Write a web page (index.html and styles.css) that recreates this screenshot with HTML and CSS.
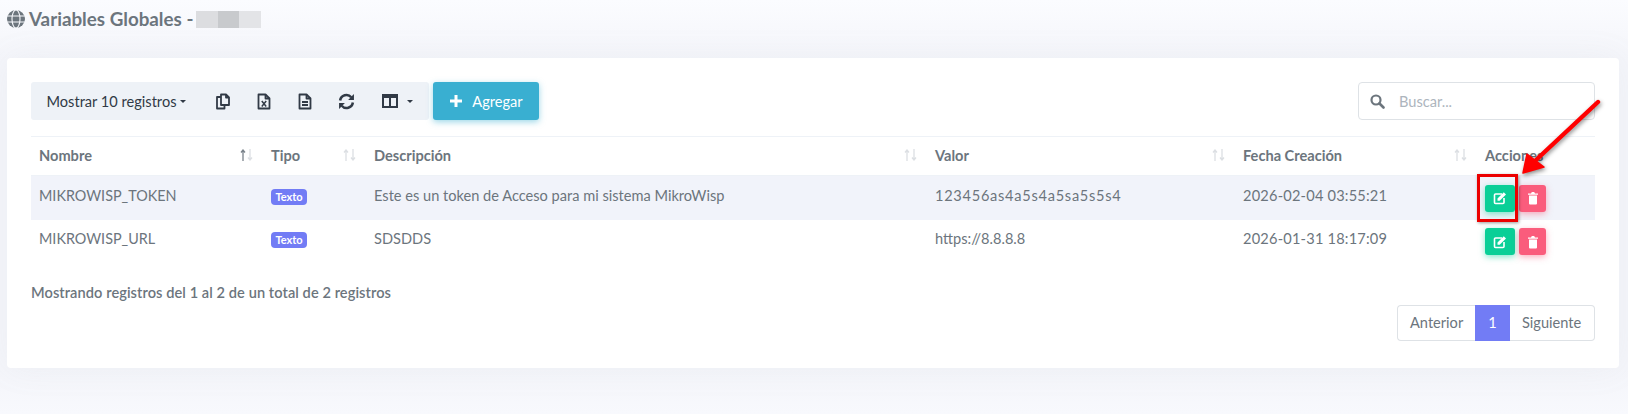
FILE: index.html
```html
<!DOCTYPE html>
<html lang="es">
<head>
<meta charset="utf-8">
<title>Variables Globales</title>
<link rel="stylesheet" href="styles.css">
</head>
<body>
<header class="page-title">
  <svg class="globe" viewBox="0 0 18 18"><circle cx="9" cy="9" r="9" fill="#6c757d"/><g fill="none" stroke="#f8f9fd" stroke-width="1.1"><ellipse cx="9" cy="9" rx="4" ry="9"/><path d="M0 6h18M0 12h18"/></g></svg>
  <h1>Variables Globales -</h1>
  <div class="redacted"><span class="r1"></span><span class="r2"></span><span class="r3"></span></div>
</header>
<main class="card">
  <div class="controls">
    <div class="toolbar">
      <button class="tool tool-length">Mostrar 10 registros<i class="caret"></i></button>
      <button class="tool tool-icon"><svg viewBox="0 0 14 16" class="ico"><g fill="none" stroke="#313a46" stroke-width="1.8" stroke-linejoin="round"><path d="M5 3.500H1v11.500h7.500v-3.500"/><path d="M5 1h5l3 3v7.500H5z"/><path d="M10 1v3h3"/></g></svg></button>
      <button class="tool tool-icon"><svg viewBox="0 0 14 16" class="ico"><g fill="none" stroke="#313a46" stroke-width="1.8" stroke-linejoin="round"><path d="M1.500 1h7l4 4v10h-11z"/><path d="M8.500 1v4h4"/></g><path d="M4.800 7.500l4.400 5.500M9.200 7.500l-4.400 5.500" stroke="#313a46" stroke-width="1.5"/></svg></button>
      <button class="tool tool-icon"><svg viewBox="0 0 14 16" class="ico"><g fill="none" stroke="#313a46" stroke-width="1.8" stroke-linejoin="round"><path d="M1.500 1h7l4 4v10h-11z"/><path d="M8.500 1v4h4M4 8.500h6M4 11.500h6"/></g></svg></button>
      <button class="tool tool-icon"><svg viewBox="0 0 16 16" class="ico-wide"><g fill="none" stroke="#313a46" stroke-width="2.400"><path d="M2 7a6 6 0 0 1 10.500-3"/><path d="M14 9a6 6 0 0 1-10.500 3"/></g><path d="M15 1v5.500H9.500zM1 15V9.500h5.500z" fill="#313a46"/></svg></button>
      <button class="tool tool-cols"><svg viewBox="0 0 16 14" class="ico-cols"><path d="M1 1h14v12H1z" fill="#eef2f7" stroke="#313a46" stroke-width="2"/><path d="M1 1h14v3H1z" fill="#313a46"/><path d="M8 1v12" stroke="#313a46" stroke-width="2"/></svg><i class="caret"></i></button>
    </div>
    <button class="add"><svg viewBox="0 0 14 14" class="plus"><path d="M7 1v12M1 7h12" stroke="#fff" stroke-width="3"/></svg>Agregar</button>
    <label class="search">
      <svg viewBox="0 0 15 15" class="search-ico"><circle cx="6" cy="6" r="4.500" fill="none" stroke="#6c757d" stroke-width="2.200"/><path d="M9.500 9.500l4 4" stroke="#6c757d" stroke-width="2.600" stroke-linecap="round"/></svg>
      <span class="placeholder">Buscar...</span>
    </label>
  </div>
  <table class="data">
    <colgroup><col class="c1"><col class="c2"><col class="c3"><col class="c4"><col class="c5"><col class="c6"></colgroup>
    <thead>
      <tr>
        <th><div class="th"><span>Nombre</span><svg class="sort" viewBox="0 0 13 12"><path class="sort-on" d="M3 12V1M1 3.500L3 1l2 2.500"/><path d="M10 0v11M8 8.500l2 2.500 2-2.500"/></svg></div></th>
        <th><div class="th"><span>Tipo</span><svg class="sort" viewBox="0 0 13 12"><path d="M3 12V1M1 3.500L3 1l2 2.500M10 0v11M8 8.500l2 2.500 2-2.500"/></svg></div></th>
        <th><div class="th"><span>Descripción</span><svg class="sort" viewBox="0 0 13 12"><path d="M3 12V1M1 3.500L3 1l2 2.500M10 0v11M8 8.500l2 2.500 2-2.500"/></svg></div></th>
        <th><div class="th"><span>Valor</span><svg class="sort" viewBox="0 0 13 12"><path d="M3 12V1M1 3.500L3 1l2 2.500M10 0v11M8 8.500l2 2.500 2-2.500"/></svg></div></th>
        <th><div class="th"><span>Fecha Creación</span><svg class="sort" viewBox="0 0 13 12"><path d="M3 12V1M1 3.500L3 1l2 2.500M10 0v11M8 8.500l2 2.500 2-2.500"/></svg></div></th>
        <th><div class="th"><span>Acciones</span></div></th>
      </tr>
    </thead>
    <tbody>
      <tr class="odd">
        <td class="name">MIKROWISP_TOKEN</td>
        <td><span class="badge">Texto</span></td>
        <td>Este es un token de Acceso para mi sistema MikroWisp</td>
        <td class="token">123456as4a5s4a5sa5s5s4</td>
        <td class="date">2026-02-04 03:55:21</td>
        <td><div class="actions">
          <button class="act edit"><svg viewBox="0 0 14 14" class="act-ico"><path d="M9 3H2.500A1 1 0 0 0 1.500 4v7.500a1 1 0 0 0 1 1H10a1 1 0 0 0 1-1V7" fill="none" stroke="#fff" stroke-width="1.600"/><path d="M4.500 7.500L10.800 1.200l2.200 2.200-6.300 6.300H4.500z" fill="#fff"/></svg></button>
          <button class="act del"><svg viewBox="0 0 12 14" class="act-ico"><path d="M1 2.500h10v1.200H1zM4 2.500l.8-1.500h2.400L8 2.500zM2 4.500h8v8a1 1 0 0 1-1 1H3a1 1 0 0 1-1-1z" fill="#fff"/></svg></button>
        </div></td>
      </tr>
      <tr class="even">
        <td class="name">MIKROWISP_URL</td>
        <td><span class="badge">Texto</span></td>
        <td>SDSDDS</td>
        <td>https://8.8.8.8</td>
        <td class="date">2026-01-31 18:17:09</td>
        <td><div class="actions">
          <button class="act edit"><svg viewBox="0 0 14 14" class="act-ico"><path d="M9 3H2.500A1 1 0 0 0 1.500 4v7.500a1 1 0 0 0 1 1H10a1 1 0 0 0 1-1V7" fill="none" stroke="#fff" stroke-width="1.600"/><path d="M4.500 7.500L10.800 1.200l2.200 2.200-6.300 6.300H4.500z" fill="#fff"/></svg></button>
          <button class="act del"><svg viewBox="0 0 12 14" class="act-ico"><path d="M1 2.500h10v1.200H1zM4 2.500l.8-1.500h2.400L8 2.500zM2 4.500h8v8a1 1 0 0 1-1 1H3a1 1 0 0 1-1-1z" fill="#fff"/></svg></button>
        </div></td>
      </tr>
    </tbody>
  </table>
  <p class="info">Mostrando registros del 1 al 2 de un total de 2 registros</p>
  <nav class="pager">
    <a class="page">Anterior</a><a class="page current">1</a><a class="page">Siguiente</a>
  </nav>
</main>
<div class="annot-box"></div>
<svg class="annot-arrow" viewBox="0 0 90 90"><path d="M79 7L17 65" stroke="#f00" stroke-width="4.400" stroke-linecap="round"/><path d="M4 78L8 59L25 72z" fill="#f00" stroke="#f00" stroke-width="1.500" stroke-linejoin="round"/></svg>
</body>
</html>
```
FILE: styles.css
```css
* { box-sizing: border-box; }
html, body { margin: 0; height: 414px; overflow: hidden; }
body {
  position: relative;
  background: linear-gradient(#fbfcff 0, #f4f5fa 60px, #f4f5fa 368px, #f8f9fd 414px);
  font-family: "Lato", "Noto Sans", sans-serif;
  font-size: 14.6px;
  color: #6c757d;
}
.page-title { display: flex; align-items: center; height: 58px; padding: 0 7px 20px; }
.globe { width: 18px; height: 18px; margin-right: 4px; }
h1 { margin: 0; font-size: 18.8px; font-weight: 700; color: #6c757d; line-height: 22px; }
.redacted { display: flex; height: 17px; margin-left: 3px; }
.redacted span { width: 21.500px; }
.r1 { background: #dcdde0; }
.r2 { background: #c8cacd; }
.r3 { background: #e3e4e7; }

.card {
  width: 1612px;
  height: 310px;
  margin-left: 7px;
  padding: 24px 24px 0;
  background: #fff;
  border-radius: 4px;
  box-shadow: 0 0 35px rgba(154,161,171,.08);
}
.controls { display: flex; align-items: stretch; height: 38px; }
button { font: inherit; border: 0; cursor: pointer; }
.toolbar { display: flex; width: 398px; background: #eef2f7; border-radius: 3px; }
.tool { background: transparent; color: #313a46; display: flex; align-items: center; justify-content: center; }
.tool-length { width: 171px; padding: 0; }
.tool-icon { width: 41px; }
.tool-cols { flex: 1; gap: 9px; justify-content: flex-start; padding-left: 16px; }
.ico { width: 14px; height: 17px; }
.ico-wide { width: 17px; height: 17px; margin-left: 2px; }
.ico-cols { width: 16px; height: 14px; }
.caret { display: inline-block; margin-left: 4px; border: 3.500px solid transparent; border-top-color: #313a46; border-bottom: 0; }
.tool-cols .caret { margin-left: 0; }
.add {
  width: 106px; margin-left: 4px; background: #39afd1; color: #fff; border-radius: 3px;
  display: flex; align-items: center; justify-content: center; gap: 9px;
  box-shadow: 0 2px 6px 0 rgba(57,175,209,.5);
}
.plus { width: 14px; height: 14px; }
.search {
  margin-left: auto; width: 237px; border: 1px solid #dee2e6; border-radius: 4px;
  display: flex; align-items: center; padding-left: 11px;
}
.search-ico { width: 15px; height: 15px; margin-right: 14px; }
.placeholder { color: #adb5bd; }

.data { width: 1564px; margin-top: 16px; border-collapse: collapse; table-layout: fixed; }
.c1 { width: 232px; }
.c2 { width: 103px; }
.c3 { width: 561px; }
.c4 { width: 308px; }
.c5 { width: 242px; }
.c6 { width: 118px; }
th { padding: 0 8px 2px; height: 39px; border-top: 1px solid #eef2f7; border-bottom: 1px solid #eef2f7; text-align: left; font-weight: 700; }
.th { display: flex; justify-content: space-between; align-items: center; }
.sort { width: 13px; height: 12px; margin-right: 2px; fill: none; stroke: #dcdfe3; stroke-width: 1.300; }
.sort-on { stroke: #7a838b; }
td { padding: 8.500px 8px 7.500px; vertical-align: top; line-height: 22px; }
.even td { padding: 8px 8px 7px; }
.name { font-size: 14.4px; }
.token { letter-spacing: .72px; }
.date { letter-spacing: .2px; }
.odd { background: #f1f3fa; }
.badge {
  display: inline-block; width: 36px; height: 16px; margin-top: 4px;
  background: #727cf5; color: #fff; border-radius: 4px;
  font-size: 11px; font-weight: 700; line-height: 16px; text-align: center; vertical-align: top;
}
.actions { display: flex; gap: 4px; margin-bottom: 1px; }
.act { height: 27px; border-radius: 3px; display: flex; align-items: center; justify-content: center; padding: 0; }
.edit { width: 30px; background: #0acf97; box-shadow: 0 2px 6px 0 rgba(10,207,151,.5); }
.del { width: 27px; background: #fa5c7c; box-shadow: 0 2px 6px 0 rgba(250,92,124,.5); }
.act-ico { width: 14px; height: 14px; }

.info { margin: 19px 0 0; line-height: 22px; font-weight: 600; letter-spacing: .07px; }
.pager { display: flex; justify-content: flex-end; margin-top: 1px; }
.page { height: 36px; line-height: 34px; border: 1px solid #dee2e6; padding: 0 12px; background: #fff; }
.page:first-child { border-radius: 4px 0 0 4px; border-right: 0; width: 78px; }
.page:last-child { border-radius: 0 4px 4px 0; border-left: 0; width: 85px; }
.current { width: 35px; padding: 0; text-align: center; background: #727cf5; border-color: #727cf5; color: #fff; }

.annot-box { position: absolute; left: 1477px; top: 174px; width: 41px; height: 48px; border: 3.500px solid #ec0000; box-shadow: 1px 1px 3px rgba(0,0,0,.4); }
.annot-arrow { position: absolute; left: 1519px; top: 95px; width: 90px; height: 90px; filter: drop-shadow(1px 2px 2px rgba(0,0,0,.45)); }
```
